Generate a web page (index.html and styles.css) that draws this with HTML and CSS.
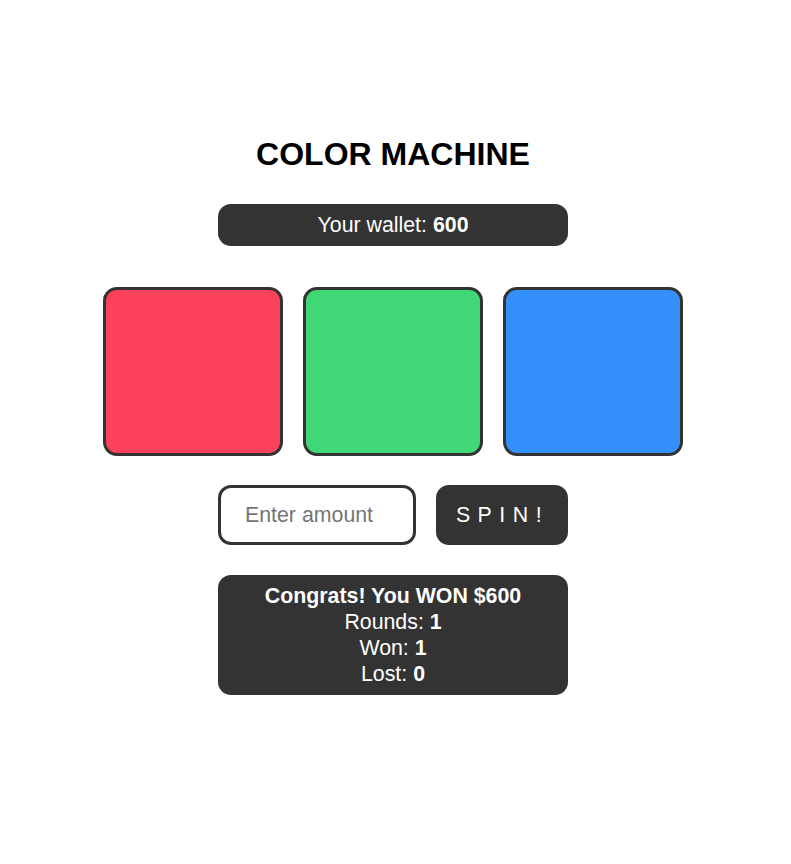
FILE: index.html
```html
<!DOCTYPE html>
<html lang="en">
<head>
<meta charset="utf-8">
<title>Color Machine</title>
<link rel="stylesheet" href="styles.css">
</head>
<body>
<main class="machine">
  <h1 class="title">COLOR MACHINE</h1>
  <div class="wallet">Your wallet: <b>600</b></div>
  <div class="slots">
    <div class="slot slot-red"></div>
    <div class="slot slot-green"></div>
    <div class="slot slot-blue"></div>
  </div>
  <div class="controls">
    <input class="amount" type="text" placeholder="Enter amount">
    <button class="spin">SPIN!</button>
  </div>
  <div class="result">
    <div class="result-msg">Congrats! You WON $600</div>
    <div>Rounds: <b>1</b></div>
    <div>Won: <b>1</b></div>
    <div>Lost: <b>0</b></div>
  </div>
</main>
</body>
</html>
```
FILE: styles.css
```css
html, body {
  margin: 0;
  background: #fff;
}
body {
  padding: 0 5px 0 0;
  font-family: "Liberation Sans", Arial, sans-serif;
  font-size: 16pt;
  color: #000;
}
.machine {
  display: flex;
  flex-direction: column;
  align-items: center;
  padding-top: 136px;
}
.title {
  margin: 0;
  font-size: 32px;
  line-height: 37px;
  font-weight: bold;
}
.wallet {
  margin-top: 31px;
  width: 350px;
  box-sizing: border-box;
  padding: 9px 0 8px;
  line-height: 25px;
  background: #333;
  color: #fff;
  text-align: center;
  border-radius: 13px;
}
.slots {
  margin-top: 41px;
  display: flex;
  gap: 20px;
}
.slot {
  width: 180px;
  height: 169px;
  box-sizing: border-box;
  border: 3px solid #333;
  border-radius: 14px;
}
.slot-red { background: #fc415a; }
.slot-green { background: #40d777; }
.slot-blue { background: #348ffb; }
.controls {
  margin-top: 29px;
  display: flex;
  gap: 20px;
}
.amount {
  width: 198px;
  height: 60px;
  box-sizing: border-box;
  border: 3px solid #333;
  border-radius: 13px;
  padding: 0 0 0 24px;
  font-family: inherit;
  font-size: 16pt;
  color: #333;
  outline: none;
}
.amount::placeholder {
  color: #757575;
}
.spin {
  width: 132px;
  height: 60px;
  border: none;
  border-radius: 13px;
  background: #333;
  color: #fff;
  font-family: inherit;
  font-size: 16pt;
  letter-spacing: 7.5px;
  padding: 0 0 0 1px;
}
.result {
  margin-top: 30px;
  width: 350px;
  box-sizing: border-box;
  padding: 8px 0;
  line-height: 26px;
  background: #333;
  color: #fff;
  text-align: center;
  border-radius: 13px;
}
.result-msg {
  font-weight: bold;
}
```
